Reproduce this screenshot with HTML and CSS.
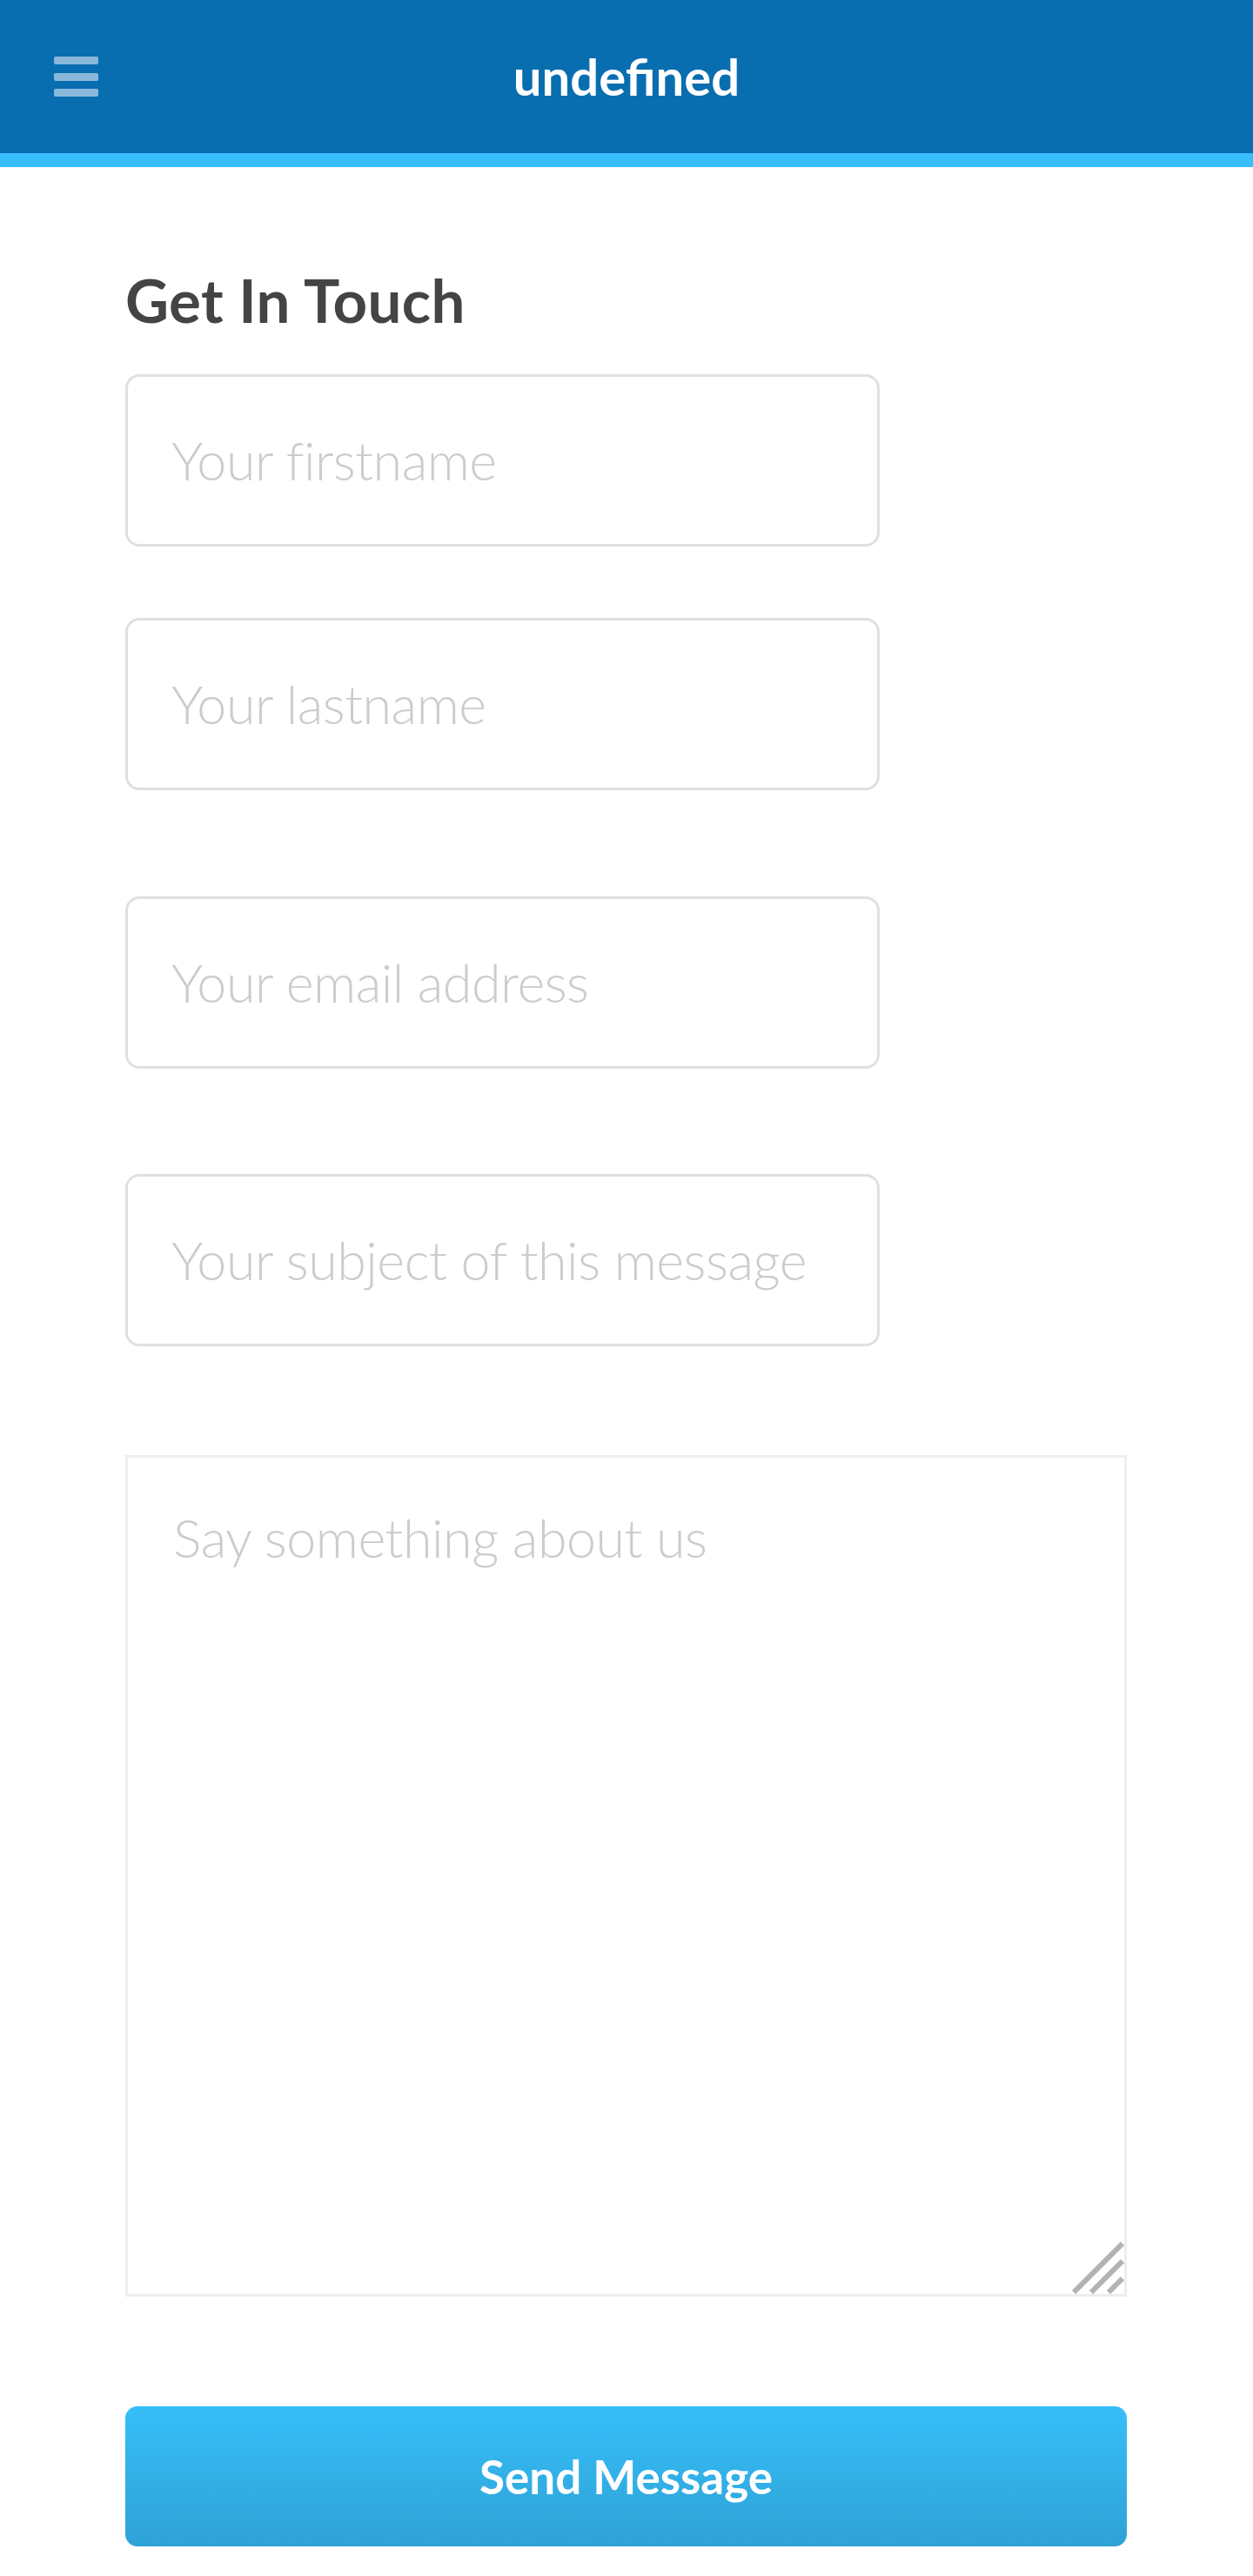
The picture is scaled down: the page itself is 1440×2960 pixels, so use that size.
FILE: index.html
```html
<!DOCTYPE html>
<html lang="en">
<head>
<meta charset="utf-8">
<title>Get In Touch</title>
<link rel="stylesheet" href="styles.css">
</head>
<body>
<header class="topbar">
  <div class="burger" aria-label="Menu">
    <span class="burger-line"></span>
    <span class="burger-line"></span>
    <span class="burger-line"></span>
  </div>
  <div class="topbar-title">undefined</div>
  <div class="topbar-spacer"></div>
</header>
<main class="page">
  <h1 class="page-title">Get In Touch</h1>
  <form class="contact-form">
    <input class="field field-first" type="text" placeholder="Your firstname">
    <input class="field field-last" type="text" placeholder="Your lastname">
    <input class="field field-email" type="email" placeholder="Your email address">
    <input class="field field-subject" type="text" placeholder="Your subject of this message">
    <div class="message-wrap">
      <textarea class="message" placeholder="Say something about us"></textarea>
      <svg class="grip" width="60" height="60" viewBox="0 0 60 60">
        <line x1="2" y1="58" x2="58" y2="2" stroke="#b3b3b3" stroke-width="6"/>
        <line x1="22" y1="58" x2="58" y2="22" stroke="#b3b3b3" stroke-width="6"/>
        <line x1="42" y1="58" x2="58" y2="42" stroke="#b3b3b3" stroke-width="6"/>
      </svg>
    </div>
    <button class="send-btn" type="button">Send Message</button>
  </form>
</main>
</body>
</html>
```
FILE: styles.css
```css
* { box-sizing: border-box; }

html, body {
  margin: 0;
  padding: 0;
  background: #ffffff;
}

body {
  font-family: Lato, "Open Sans", "Liberation Sans", sans-serif;
}

.topbar {
  display: grid;
  grid-template-columns: 1fr auto 1fr;
  align-items: center;
  height: 192px;
  background: #086eb0;
  border-bottom: 16px solid #36bffc;
}

.burger {
  justify-self: start;
  margin-left: 62px;
  display: flex;
  flex-direction: column;
  gap: 9.5px;
}

.burger-line {
  display: block;
  width: 51px;
  height: 9px;
  border-radius: 2px;
  background: #8ab8da;
}

.topbar-title {
  color: #ffffff;
  font-weight: 700;
  font-size: 58px;
  line-height: 176px;
}

.page {
  padding: 0 145px 0 144px;
}

.page-title {
  margin: 112px 0 0 0;
  font-size: 69px;
  line-height: 1.2;
  font-weight: 700;
  letter-spacing: 0.4px;
  color: #444444;
}

.contact-form {
  display: flex;
  flex-direction: column;
  align-items: flex-start;
  margin-top: 43px;
}

.field {
  display: block;
  width: 867px;
  height: 198px;
  margin: 0;
  padding: 0 30px 0 50px;
  border: 3px solid #e0e0e0;
  border-radius: 16px;
  background: #ffffff;
  font-family: Lato, "Open Sans", sans-serif;
  font-weight: 300;
  font-size: 61px;
  letter-spacing: -0.5px;
  color: #444;
  outline: none;
}

.field::placeholder,
.message::placeholder {
  color: #cccccc;
  opacity: 1;
}

.field-last { margin-top: 82px; }
.field-email { margin-top: 122px; }
.field-subject { margin-top: 121px; }

.message-wrap {
  position: relative;
  width: 100%;
  margin-top: 125px;
}

.message {
  display: block;
  width: 100%;
  height: 967px;
  margin: 0;
  padding: 55px 50px 0 52px;
  border: 3px solid #eeeeee;
  border-radius: 0;
  resize: none;
  font-family: Lato, "Open Sans", sans-serif;
  font-weight: 300;
  font-size: 61px;
  letter-spacing: -0.5px;
  line-height: 1.2;
  color: #444;
  outline: none;
}

.grip {
  position: absolute;
  right: 3px;
  bottom: 3px;
}

.send-btn {
  display: block;
  width: 100%;
  height: 161px;
  margin-top: 126px;
  border: none;
  border-radius: 14px;
  background: linear-gradient(180deg, #36bef9 0%, #2fa2d6 100%);
  color: #ffffff;
  font-family: Lato, "Open Sans", sans-serif;
  font-weight: 700;
  font-size: 53px;
  cursor: pointer;
}
```
